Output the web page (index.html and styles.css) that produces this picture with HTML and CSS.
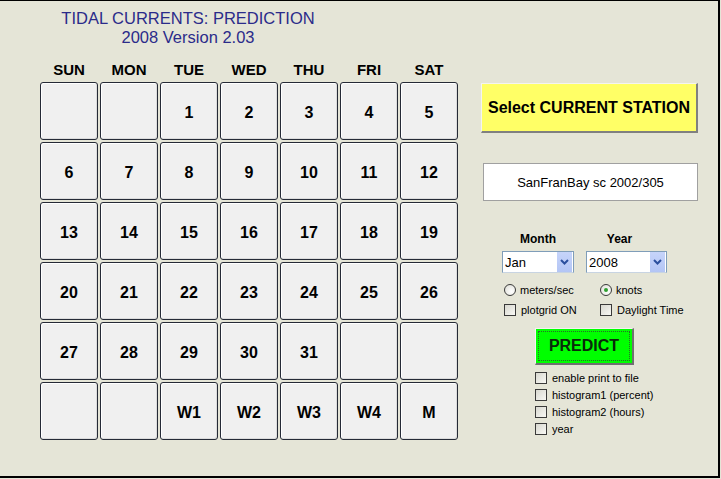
FILE: index.html
```html
<!DOCTYPE html>
<html>
<head>
<meta charset="utf-8">
<link rel="stylesheet" href="styles.css">
</head>
<body>
<div class="frame">
  <div class="left">
    <div class="title">
      <div>TIDAL CURRENTS: PREDICTION</div>
      <div>2008 Version 2.03</div>
    </div>
    <div class="days">
      <span>SUN</span><span>MON</span><span>TUE</span><span>WED</span><span>THU</span><span>FRI</span><span>SAT</span>
    </div>
    <div class="grid">
      <div class="cell"></div><div class="cell"></div><div class="cell">1</div><div class="cell">2</div><div class="cell">3</div><div class="cell">4</div><div class="cell">5</div>
      <div class="cell">6</div><div class="cell">7</div><div class="cell">8</div><div class="cell">9</div><div class="cell">10</div><div class="cell">11</div><div class="cell">12</div>
      <div class="cell">13</div><div class="cell">14</div><div class="cell">15</div><div class="cell">16</div><div class="cell">17</div><div class="cell">18</div><div class="cell">19</div>
      <div class="cell">20</div><div class="cell">21</div><div class="cell">22</div><div class="cell">23</div><div class="cell">24</div><div class="cell">25</div><div class="cell">26</div>
      <div class="cell">27</div><div class="cell">28</div><div class="cell">29</div><div class="cell">30</div><div class="cell">31</div><div class="cell"></div><div class="cell"></div>
      <div class="cell"></div><div class="cell"></div><div class="cell">W1</div><div class="cell">W2</div><div class="cell">W3</div><div class="cell">W4</div><div class="cell">M</div>
    </div>
  </div>
  <div class="right">
    <div class="station-btn">Select CURRENT STATION</div>
    <div class="station-box">SanFranBay sc 2002/305</div>
    <div class="selectors">
      <div class="sel-col month">
        <div class="sel-label">Month</div>
        <div class="select sel-month"><span class="sel-val">Jan</span><span class="arrow"><svg width="9" height="6" viewBox="0 0 9 6"><path d="M1 1 L4.5 4.5 L8 1" fill="none" stroke="#2b4f9e" stroke-width="2"/></svg></span></div>
      </div>
      <div class="sel-col year">
        <div class="sel-label">Year</div>
        <div class="select sel-year"><span class="sel-val">2008</span><span class="arrow"><svg width="9" height="6" viewBox="0 0 9 6"><path d="M1 1 L4.5 4.5 L8 1" fill="none" stroke="#2b4f9e" stroke-width="2"/></svg></span></div>
      </div>
    </div>
    <div class="opts">
      <div class="opt"><span class="radio"></span>meters/sec</div>
      <div class="opt"><span class="radio on"></span>knots</div>
      <div class="opt"><span class="check"></span>plotgrid ON</div>
      <div class="opt"><span class="check"></span>Daylight Time</div>
    </div>
    <div class="predict-wrap">
      <div class="predict"><span>PREDICT</span></div>
      <div class="checklist">
        <div class="opt"><span class="check"></span>enable print to file</div>
        <div class="opt"><span class="check"></span>histogram1 (percent)</div>
        <div class="opt"><span class="check"></span>histogram2 (hours)</div>
        <div class="opt"><span class="check"></span>year</div>
      </div>
    </div>
  </div>
</div>
</body>
</html>
```

FILE: styles.css
```css
html, body {
  margin: 0;
  padding: 0;
  background: #e5e5d7;
}
body {
  font-family: "Liberation Sans", Arial, sans-serif;
}
.frame {
  width: 720px;
  height: 478px;
  box-sizing: border-box;
  border-top: 1px solid #000;
  border-right: 2px solid #000;
  border-bottom: 2px solid #000;
  background: #e5e5d7;
  display: flex;
}
.left {
  width: 458px;
  padding-left: 40px;
  box-sizing: border-box;
  flex: none;
}
.title {
  width: 296px;
  text-align: center;
  color: #2b2b8a;
  font-size: 16.5px;
  line-height: 19px;
  padding-top: 8px;
}
.days {
  display: grid;
  grid-template-columns: repeat(7, 58px);
  column-gap: 2px;
  margin-top: 14px;
  font-size: 15px;
  font-weight: bold;
  line-height: 18px;
  text-align: center;
  color: #000;
}
.grid {
  display: grid;
  grid-template-columns: repeat(7, 58px);
  grid-auto-rows: 58px;
  gap: 2px;
  margin-top: 3px;
}
.cell {
  box-sizing: border-box;
  background: #f0f0f0;
  border: 1px solid #252a36;
  border-radius: 3px;
  box-shadow: inset 1px 1px 0 #fff, inset -1px -1px 0 #dcdcdc;
  display: flex;
  align-items: center;
  justify-content: center;
  font-size: 16px;
  font-weight: bold;
  color: #000;
  padding-top: 3px;
}
.right {
  width: 217px;
  margin-left: 23px;
  flex: none;
  display: flex;
  flex-direction: column;
}
.station-btn {
  margin-top: 82px;
  height: 50px;
  box-sizing: border-box;
  background: #ffff66;
  border-top: 1px solid #f4f4f0;
  border-left: 1px solid #f4f4f0;
  border-right: 2px solid #808080;
  border-bottom: 2px solid #808080;
  display: flex;
  align-items: center;
  justify-content: center;
  font-size: 16px;
  font-weight: bold;
  color: #000;
  white-space: nowrap;
}
.station-box {
  margin-top: 30px;
  margin-left: 2px;
  height: 38px;
  box-sizing: border-box;
  background: #fff;
  border: 1px solid #a0a0a0;
  display: flex;
  align-items: center;
  justify-content: center;
  font-size: 13px;
  color: #000;
}
.selectors {
  display: flex;
  margin-top: 31px;
  margin-left: 21px;
}
.sel-col {
  display: flex;
  flex-direction: column;
  align-items: center;
}
.sel-col.month { width: 72px; }
.sel-col.year { width: 81px; margin-left: 12px; }
.sel-label {
  font-size: 12px;
  font-weight: bold;
  line-height: 15px;
  color: #000;
}
.sel-col.year .sel-label { margin-left: -14px; }
.select {
  margin-top: 4px;
  height: 22px;
  width: 100%;
  box-sizing: border-box;
  background: #fff;
  border: 1px solid #7f9db9;
  border-bottom-color: #c8d4e2;
  display: flex;
  align-items: center;
}
.sel-val {
  flex: 1;
  font-size: 13px;
  padding-left: 2px;
  color: #000;
}
.arrow {
  width: 15px;
  height: 20px;
  background: linear-gradient(#c6d4fa, #b3c5f5);
  display: flex;
  align-items: center;
  justify-content: center;
  margin-right: 1px;
}
.opts {
  display: grid;
  grid-template-columns: 96px auto;
  row-gap: 6px;
  margin-top: 10px;
  margin-left: 23px;
}
.opt {
  display: flex;
  align-items: center;
  font-size: 11px;
  line-height: 14px;
  color: #000;
}
.radio {
  width: 12px;
  height: 12px;
  box-sizing: border-box;
  border-radius: 50%;
  border: 1px solid #3a3a3a;
  background: radial-gradient(circle at 65% 65%, #fff, #dcdcd4);
  margin-right: 4px;
  display: inline-flex;
  align-items: center;
  justify-content: center;
}
.radio.on::after {
  content: "";
  width: 4px;
  height: 4px;
  border-radius: 50%;
  background: #2fa02f;
}
.check {
  width: 12px;
  height: 12px;
  box-sizing: border-box;
  border: 1px solid #3a3a3a;
  background: linear-gradient(135deg, #d8d8d0, #f8f8f4);
  margin-right: 5px;
  flex: none;
}
.predict-wrap {
  margin-left: 54px;
  margin-top: 11px;
}
.predict {
  width: 99px;
  height: 37px;
  box-sizing: border-box;
  background: #00ff00;
  border-top: 1px solid #f4f4f0;
  border-left: 1px solid #f4f4f0;
  border-right: 2px solid #707070;
  border-bottom: 2px solid #707070;
  padding: 2px;
}
.predict span {
  display: flex;
  height: 100%;
  box-sizing: border-box;
  border: 1px dotted #2a6a2a;
  align-items: center;
  justify-content: center;
  font-size: 16px;
  font-weight: bold;
  color: #0a2a0a;
}
.checklist {
  margin-top: 6px;
  display: flex;
  flex-direction: column;
  gap: 3px;
}
```
